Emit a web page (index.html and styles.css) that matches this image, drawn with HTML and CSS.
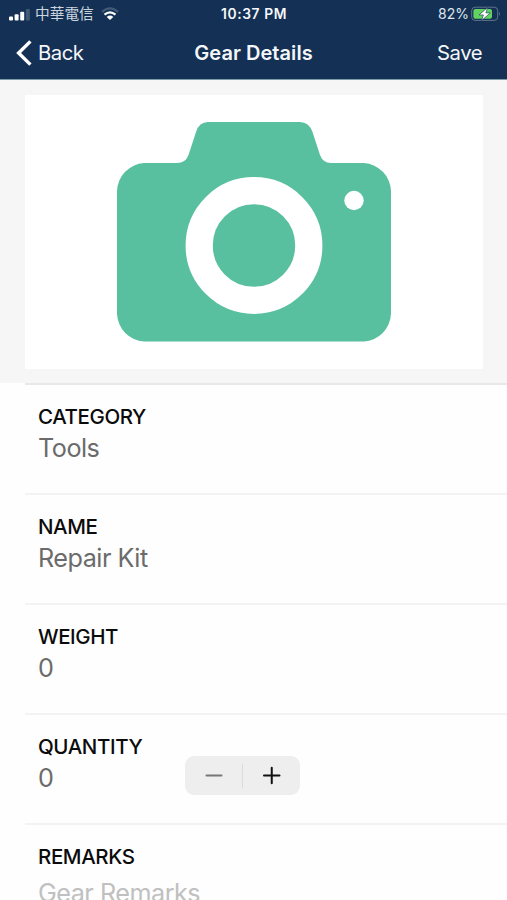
FILE: index.html
```html
<!DOCTYPE html>
<html lang="en">
<head>
<meta charset="utf-8">
<title>Gear Details</title>
<link rel="stylesheet" href="styles.css">
</head>
<body>
<header class="header">
  <div class="status">
    <div class="carrier">
      <svg class="signal" width="22" height="12" viewBox="0 0 22 12" fill="#fff"><rect x="0" y="7.5" width="4" height="4" rx="1"/><rect x="5.6" y="5.2" width="4" height="6.3" rx="1"/><rect x="11.2" y="2.7" width="4" height="8.8" rx="1"/><rect x="16.8" y="0" width="4" height="11.5" rx="1" opacity=".2"/></svg>
      <span class="carrier-name">中華電信</span>
      <svg class="wifi" width="18" height="14" viewBox="0 0 18 14" fill="none" stroke="#fff" stroke-width="2.2"><path d="M1 4.8Q9-2.2 17 4.8" opacity=".2"/><path d="M3.5 7.7Q9 2.9 14.5 7.7"/><path d="M5.7 9.9Q9 7.2 12.3 9.9L9 13Z" fill="#fff" stroke="none"/></svg>
    </div>
    <span class="time">10:37 PM</span>
    <div class="power">
      <span class="percent">82%</span>
      <svg width="30" height="16" viewBox="0 0 30 16"><rect x=".7" y="1.2" width="26" height="13.2" rx="3.5" fill="none" stroke="#60758f" stroke-width="1"/><rect x="2.4" y="2.9" width="18.6" height="9.8" rx="2" fill="#62d260"/><path d="M28 5.5Q29.8 7.7 28 9.9Z" fill="#60758f"/><path d="M16.7 1.4L8 8.9h4.4L10.5 14.6 19.3 6.9H14.9Z" fill="#fff" stroke="#143155" stroke-width=".6"/></svg>
    </div>
  </div>
  <nav class="nav">
    <a class="back"><svg width="16" height="26" viewBox="0 0 16 26" fill="none" stroke="#fff" stroke-width="3.4"><path d="M14.4 1.4L2.6 13l11.8 11.6"/></svg><span class="back-label">Back</span></a>
    <h1 class="title">Gear Details</h1>
    <a class="save">Save</a>
  </nav>
</header>
<main>
  <section class="photo">
    <div class="photo-card">
      <svg width="274" height="220" viewBox="0 0 274 220"><path fill="#59c09f" d="M27 41H60Q68.5 41 71.5 33L79 10Q82 0 91 0H183Q192 0 195.5 10L203 33Q206 41 214 41H247A29 29 0 0 1 274 69V192A29 29 0 0 1 247 219.5H27A29 29 0 0 1 0 192V69A29 29 0 0 1 27 41Z"/><circle cx="137" cy="123.5" r="54.8" fill="none" stroke="#fff" stroke-width="27.2"/><circle cx="237" cy="78.5" r="9.7" fill="#fff"/></svg>
    </div>
  </section>
  <section class="fields">
    <div class="field first"><h2 class="label">CATEGORY</h2><p class="value">Tools</p></div>
    <div class="field"><h2 class="label">NAME</h2><p class="value">Repair Kit</p></div>
    <div class="field"><h2 class="label">WEIGHT</h2><p class="value">0</p></div>
    <div class="field quantity-row">
      <div class="quantity"><h2 class="label">QUANTITY</h2><p class="value">0</p></div>
      <div class="stepper">
        <svg width="57" height="39" viewBox="0 0 57 39" stroke="#777" stroke-width="2" stroke-linecap="round"><path d="M21.5 19.5h15"/></svg>
        <span class="divider"></span>
        <svg width="57" height="39" viewBox="0 0 57 39" stroke="#111" stroke-width="2" stroke-linecap="round"><path d="M21 19.5h15.5M28.75 11.7v15.6"/></svg>
      </div>
    </div>
    <div class="field"><h2 class="label">REMARKS</h2><p class="value placeholder">Gear Remarks</p></div>
  </section>
</main>
</body>
</html>
```
FILE: styles.css
```css
* { box-sizing: border-box; }
body { margin: 0; height: 900px; overflow: hidden; background: #fefefe; color: #0b0b0b; font-family: Inter, "Noto Sans CJK TC", sans-serif; }
h1, h2, p { margin: 0; font-weight: 400; }
svg { display: block; flex: none; }
.header { height: 80px; background: #143155; color: #f4f7fa; border-bottom: 1px solid #7f9baa; }
.status { display: grid; grid-template-columns: 1fr auto 1fr; align-items: center; height: 28px; padding: 0 6px 0 9px; font-size: 14px; }
.carrier { display: flex; align-items: center; }
.signal { margin-top: 2px; }
.carrier-name { font-family: "Noto Sans CJK TC", sans-serif; font-size: 14.7px; line-height: 26px; margin: -1px 7px 1px 4px; color: #cbd5df; }
.wifi { margin-top: 0; }
.time { font-weight: 600; font-size: 13.8px; letter-spacing: .6px; margin-right: 2px; }
.power { display: flex; align-items: center; justify-content: flex-end; gap: 2px; }
.percent { font-size: 14px; color: #dfe6ed; margin-top: -1px; }
.nav { display: grid; grid-template-columns: 1fr auto 1fr; align-items: center; height: 49px; padding: 0 25px 0 16px; }
.back { display: flex; align-items: center; gap: 6px; }
.back-label, .save { font-size: 20.3px; letter-spacing: -.5px; line-height: 26px; }
.title { font-size: 20px; font-weight: 600; letter-spacing: .05px; line-height: 26px; margin-left: 9px; }
.save { text-align: right; }
.photo { height: 303px; padding: 15px 24px 14px 25px; background: #f6f6f6; }
.photo-card { display: flex; justify-content: center; height: 274px; padding-top: 27px; background: #fff; }
.fields { padding-left: 25px; }
.field { height: 110px; padding: 19px 13px 0; border-top: 2px solid #f3f3f3; }
.first { border-color: #e8e8e8; }
.label { font-size: 20.5px; font-weight: 500; line-height: 25px; letter-spacing: -.4px; }
.value { margin-top: 3px; color: #6b6b6b; font-size: 25.2px; line-height: 32px; letter-spacing: -.5px; }
.placeholder { margin-top: 8px; color: #c0c0c0; }
.quantity-row { display: flex; }
.quantity { width: 147px; }
.stepper { display: flex; align-items: center; width: 115px; height: 39px; margin-top: 22px; border-radius: 9px; background: #eee; }
.divider { width: 1px; height: 24px; background: #dcdcdc; }
```
